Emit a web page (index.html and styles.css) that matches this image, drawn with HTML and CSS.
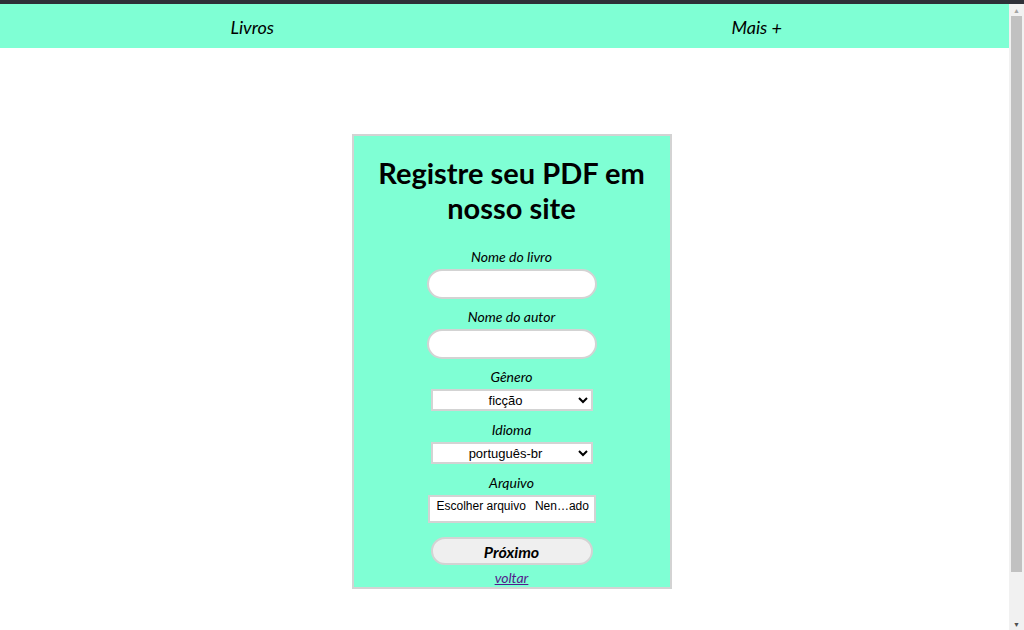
FILE: index.html
```html
<!DOCTYPE html>
<html lang="pt-br">
<head>
    <meta charset="UTF-8">
    <meta name="viewport" content="width=device-width, initial-scale=1.0">
    <title>Registrar PDF</title>
    <link rel="stylesheet" href="styles.css">
</head>
<body>

<div class="topo"></div>

<div class="janela">
    <div class="pagina">
        <nav class="menu">
            <a href="#" class="menu-item">Livros</a>
            <a href="#" class="menu-item">Mais +</a>
        </nav>

        <main class="conteudo">
            <form class="cadastro">
                <h1>Registre seu PDF em nosso site</h1>

                <div class="campo">
                    <label for="livro">Nome do livro</label>
                    <input type="text" id="livro" class="texto">
                </div>

                <div class="campo">
                    <label for="autor">Nome do autor</label>
                    <input type="text" id="autor" class="texto">
                </div>

                <div class="campo">
                    <label for="genero">Gênero</label>
                    <select id="genero">
                        <option>ficção</option>
                        <option>romance</option>
                        <option>terror</option>
                    </select>
                </div>

                <div class="campo">
                    <label for="idioma">Idioma</label>
                    <select id="idioma">
                        <option>português-br</option>
                        <option>inglês</option>
                    </select>
                </div>

                <div class="campo">
                    <label for="arquivo">Arquivo</label>
                    <div class="arquivo" id="arquivo">
                        <span>Escolher arquivo</span>
                        <span>Nen…ado</span>
                    </div>
                </div>

                <button type="submit" class="proximo">Próximo</button>
                <a href="#" class="voltar">voltar</a>
            </form>
        </main>
    </div>

    <!-- barra de rolagem -->
    <div class="rolagem">
        <span class="seta">&#9650;</span>
        <div class="polegar"></div>
        <span class="seta">&#9660;</span>
    </div>
</div>

</body>
</html>
```

FILE: styles.css
```css
body {
    margin: 0;
    font-family: Lato, sans-serif;
    background-color: #fff;
    color: #000;
    overflow: hidden;
}
.topo {
    height: 4px;
    background-color: #2e3038;
}
.janela {
    display: flex;
    height: 626px;
}
.pagina {
    flex: 1;
}
.menu {
    display: flex;
    height: 44px;
    align-items: center;
    background-color: aquamarine;
}
.menu-item {
    flex: 1;
    text-align: center;
    font-style: italic;
    font-size: 18px;
    color: #000;
    text-decoration: none;
    padding-top: 2px;
}
.conteudo {
    display: flex;
    justify-content: center;
    padding: 86px 0 0 14px;
}
.cadastro {
    width: 316px;
    border: 2px solid #d3d3d3;
    background-color: aquamarine;
    display: flex;
    flex-direction: column;
    align-items: center;
    padding: 20px 0 1px;
}
.cadastro h1 {
    font-family: Lato, sans-serif;
    font-size: 29px;
    line-height: 35px;
    text-align: center;
    margin: -1px 0 23px;
}
.campo {
    display: flex;
    flex-direction: column;
    align-items: center;
    gap: 4px;
    margin-bottom: 9px;
}
.campo label {
    font-style: italic;
    font-size: 14px;
    line-height: 17px;
}
.texto {
    width: 170px;
    height: 30px;
    box-sizing: border-box;
    border: 2px solid #d3d3d3;
    border-radius: 15px;
    background-color: #fff;
    outline: none;
}
select {
    width: 162px;
    height: 22px;
    box-sizing: border-box;
    border: 2px solid #d3d3d3;
    background-color: #fff;
    font-family: Arial, "Liberation Sans", sans-serif;
    font-size: 13px;
    text-align: center;
    text-align-last: center;
    border-radius: 0;
    margin-bottom: 1px;
}
.arquivo {
    width: 168px;
    height: 28px;
    box-sizing: border-box;
    border: 2px solid #d3d3d3;
    background-color: #fff;
    font-family: Arial, "Liberation Sans", sans-serif;
    font-size: 12px;
    padding: 2px 0 0 7px;
    white-space: nowrap;
    display: flex;
    gap: 9px;
}
.proximo {
    width: 162px;
    height: 28px;
    margin-top: 5px;
    border: 2px solid #d3d3d3;
    border-radius: 14px;
    background-color: #efefef;
    font-family: Lato, sans-serif;
    font-style: italic;
    font-weight: bold;
    font-size: 16px;
}
.voltar {
    font-style: italic;
    font-size: 14px;
    color: #551a8b;
    margin-top: 4px;
}
.rolagem {
    width: 15px;
    background-color: #f1f1f1;
    display: flex;
    flex-direction: column;
    align-items: center;
}
.seta {
    font-size: 7px;
    line-height: 12px;
    color: #a3a3a3;
}
.seta:last-child {
    color: #505050;
}
.polegar {
    flex: 1;
    width: 11px;
    margin: 0 0 46px;
    background-color: #c1c1c1;
}
```
